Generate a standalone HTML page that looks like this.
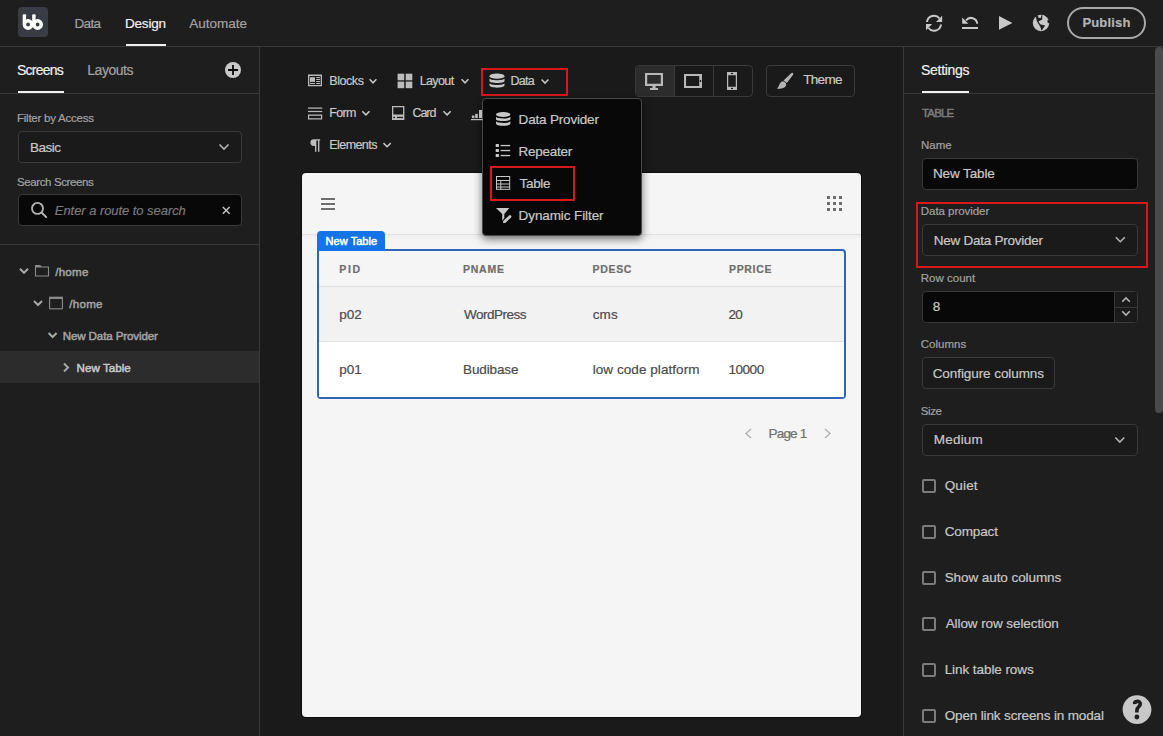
<!DOCTYPE html>
<html><head><meta charset="utf-8"><style>
*{box-sizing:border-box;margin:0;padding:0}
html,body{width:1163px;height:736px;overflow:hidden;background:#1a1a1a;font-family:'Liberation Sans',sans-serif;position:relative}
.t{position:absolute;z-index:6;-webkit-text-stroke:0.2px currentColor;white-space:nowrap;font-family:'Liberation Sans',sans-serif}
.probe{font-family:'Liberation Sans',sans-serif;white-space:nowrap}
.a{position:absolute}
svg{position:absolute;overflow:visible}

</style></head><body>
<!-- top bar -->
<div class="a" style="left:0;top:0;width:1163px;height:46px;background:#1e1e1e"></div>
<div class="a" style="left:0;top:46px;width:1163px;height:1px;background:#393939"></div>
<!-- logo -->
<div class="a" style="left:18px;top:7px;width:30px;height:30px;border-radius:4px;background:#3a3c45"></div>
<div class="a" style="left:126px;top:44px;width:40px;height:2px;background:#efefef"></div>
<!-- publish -->
<div class="a" style="left:1067px;top:7px;width:79px;height:32px;border-radius:16px;border:2px solid #a8a8a8"></div>

<!-- left panel -->
<div class="a" style="left:0;top:47px;width:259px;height:689px;background:#1e1e1e"></div>
<div class="a" style="left:259px;top:47px;width:1px;height:689px;background:#393939"></div>
<div class="a" style="left:18px;top:91px;width:46px;height:2px;background:#efefef"></div>
<div class="a" style="left:0;top:93px;width:259px;height:1px;background:#393939"></div>
<div class="a" style="left:18px;top:131px;width:224px;height:32px;border-radius:4px;border:1px solid #393939;background:#1a1a1a"></div>
<div class="a" style="left:18px;top:194px;width:224px;height:32px;border-radius:4px;border:1px solid #393939;background:#080808"></div>
<div class="a" style="left:0;top:244px;width:259px;height:1px;background:#393939"></div>
<div class="a" style="left:0;top:351px;width:259px;height:32px;background:#2c2c2c"></div>

<!-- right panel -->
<div class="a" style="left:903px;top:47px;width:1px;height:689px;background:#393939"></div>
<div class="a" style="left:904px;top:47px;width:259px;height:689px;background:#1e1e1e"></div>
<div class="a" style="left:922px;top:91px;width:47px;height:2px;background:#efefef"></div>
<div class="a" style="left:904px;top:93px;width:251px;height:1px;background:#393939"></div>
<div class="a" style="left:1155px;top:47px;width:8px;height:366px;border-radius:4px;background:#4a4a4a"></div>
<div class="a" style="left:922px;top:158px;width:216px;height:32px;border-radius:4px;border:1px solid #393939;background:#080808"></div>
<div class="a" style="left:922px;top:224px;width:216px;height:32px;border-radius:4px;border:1px solid #393939;background:#1a1a1a"></div>
<div class="a" style="left:916px;top:202px;width:232px;height:66px;border:2px solid #d7191e"></div>
<div class="a" style="left:922px;top:291px;width:216px;height:32px;border-radius:4px;border:1px solid #393939;background:#080808"></div>
<div class="a" style="left:1114px;top:292px;width:23px;height:30px;border-left:1px solid #393939;background:#1a1a1a;border-radius:0 3px 3px 0"></div>
<div class="a" style="left:1115px;top:307px;width:22px;height:1px;background:#393939"></div>
<div class="a" style="left:922px;top:357px;width:133px;height:32px;border-radius:4px;border:1px solid #393939;background:#1a1a1a"></div>
<div class="a" style="left:922px;top:424px;width:216px;height:32px;border-radius:4px;border:1px solid #393939;background:#1a1a1a"></div>
<div class="a" style="left:922px;top:479px;width:14px;height:14px;border-radius:2px;border:2px solid #7b7b7b"></div>
<div class="a" style="left:922px;top:525px;width:14px;height:14px;border-radius:2px;border:2px solid #7b7b7b"></div>
<div class="a" style="left:922px;top:571px;width:14px;height:14px;border-radius:2px;border:2px solid #7b7b7b"></div>
<div class="a" style="left:922px;top:617px;width:14px;height:14px;border-radius:2px;border:2px solid #7b7b7b"></div>
<div class="a" style="left:922px;top:663px;width:14px;height:14px;border-radius:2px;border:2px solid #7b7b7b"></div>
<div class="a" style="left:922px;top:709px;width:14px;height:14px;border-radius:2px;border:2px solid #7b7b7b"></div>


<!-- center toolbar -->
<div class="a" style="left:481px;top:68px;width:87px;height:28px;border:2px solid #d7191e"></div>
<div class="a" style="left:635px;top:65px;width:118px;height:32px;border-radius:4px;border:1px solid #393939"></div>
<div class="a" style="left:636px;top:66px;width:38px;height:30px;border-radius:3px 0 0 3px;background:#2c2c2c"></div>
<div class="a" style="left:674px;top:66px;width:1px;height:30px;background:#393939"></div>
<div class="a" style="left:713px;top:66px;width:1px;height:30px;background:#393939"></div>
<div class="a" style="left:766px;top:65px;width:89px;height:32px;border-radius:4px;border:1px solid #393939"></div>

<!-- preview screen -->
<div class="a" style="left:301px;top:172px;width:561px;height:546px;border-radius:5px;background:#0e0e0e"></div>
<div class="a" style="left:302px;top:173px;width:559px;height:544px;border-radius:4px;background:#f5f5f5"></div>
<div class="a" style="left:302px;top:234px;width:559px;height:1px;background:#e1e1e1"></div>
<div class="a" style="left:302px;top:235px;width:559px;height:5px;background:linear-gradient(#eeeeee,#f5f5f5)"></div>
<div class="a" style="left:317px;top:249px;width:529px;height:150px;border:2px solid #2f66b3;border-radius:0 4px 4px 4px"></div>
<div class="a" style="left:319px;top:286px;width:525px;height:1px;background:#e1e1e1"></div>
<div class="a" style="left:319px;top:287px;width:525px;height:54px;background:#f2f2f2"></div>
<div class="a" style="left:319px;top:341px;width:525px;height:1px;background:#e1e1e1"></div>
<div class="a" style="left:319px;top:342px;width:525px;height:55px;background:#ffffff"></div>
<div class="a" style="left:317px;top:231px;width:68px;height:20px;border-radius:4px 4px 0 0;background:#1473e6"></div>

<!-- popover -->
<div class="a" style="left:482px;top:98px;width:160px;height:138px;border-radius:4px;border:1px solid #494949;background:#080808;box-shadow:0 3px 9px rgba(0,0,0,.55)"></div>
<div class="a" style="left:490px;top:166px;width:85px;height:35px;border:2px solid #d7191e"></div>
<svg width="1163" height="736" viewBox="0 0 1163 736" style="left:0;top:0;z-index:5">
<!-- logo bb -->
<g fill="#ffffff" fill-rule="evenodd">
 <path d="M22.7,15.2 a1,1 0 0 1 1,-1 h1.4 a1,1 0 0 1 1,1 V24.5 h-3.4 Z"/>
 <path d="M28.1,19.1 a5.4,5.4 0 1,1 0,10.8 a5.4,5.4 0 1,1 0,-10.8 z M28.1,22.6 a1.9,1.9 0 1,0 0,3.8 a1.9,1.9 0 1,0 0,-3.8z"/>
 <path d="M32.2,15.2 a1,1 0 0 1 1,-1 h1.4 a1,1 0 0 1 1,1 V24.5 h-3.4 Z"/>
 <path d="M37.6,19.1 a5.4,5.4 0 1,1 0,10.8 a5.4,5.4 0 1,1 0,-10.8 z M37.6,22.6 a1.9,1.9 0 1,0 0,3.8 a1.9,1.9 0 1,0 0,-3.8z"/>
</g>
<!-- refresh -->
<g fill="none" stroke="#c8c8c8" stroke-width="2">
 <path d="M927,22 A7,7 0 0 1 939.5,18.5"/>
 <path d="M941,24.5 A7,7 0 0 1 928.5,28"/>
</g>
<g fill="#c8c8c8">
 <path d="M942.2,15.8 L942.2,22 L936,22 Z"/>
 <path d="M926,24 L932.2,24 L926,30.2 Z"/>
 <!-- undo -->
 <path d="M962.2,17.6 L962.2,23.8 L968.4,23.8 Z"/>
 <rect x="962" y="27" width="16" height="2"/>
 <!-- play -->
 <path d="M999,16 L1012.4,23 L999,29.8 Z"/>
</g>
<path d="M966,20.5 A6.2,6.2 0 0 1 977.2,23.8" fill="none" stroke="#c8c8c8" stroke-width="2"/>
<!-- globe -->
<circle cx="1041" cy="23" r="8.2" fill="#c8c8c8"/>
<path d="M1035.6,16.6 L1038,15.2 L1038.4,17.7 L1040.8,18 L1041.6,15 L1042.3,15.2 L1042.2,19.6 L1040.4,20.6 L1038.6,21.2 L1039,22.6 L1040.6,24.4 L1045.2,25.4 L1041.5,30.8 L1040.2,26.4 L1038.4,23.8 L1036.8,21 L1036.2,18.2 Z M1047.3,20.2 L1049.4,19.8 L1049.4,23.2 L1047.8,22.9 Z" fill="#1e1e1e"/>
<!-- plus circle -->
<circle cx="233" cy="70" r="8" fill="#c8c8c8"/>
<path d="M228,70 H238 M233,65 V75" stroke="#080808" stroke-width="1.8"/>
<!-- select chevron left -->
<path d="M219.5,144.5 L224,149 L228.5,144.5" fill="none" stroke="#b4b4b4" stroke-width="1.6"/>
<!-- search icon -->
<circle cx="37.5" cy="208.4" r="5.5" fill="none" stroke="#b4b4b4" stroke-width="1.8"/>
<path d="M41.6,212.5 L46.2,217.1" stroke="#b4b4b4" stroke-width="2" stroke-linecap="round"/>
<!-- close x -->
<path d="M222.8,207 L229.6,213.8 M229.6,207 L222.8,213.8" stroke="#c0c0c0" stroke-width="1.5"/>
<!-- tree chevrons -->
<g fill="none" stroke="#a8a8a8" stroke-width="2">
 <path d="M20,268.8 L24,272.8 L28,268.8"/>
 <path d="M34,301 L38,305 L42,301"/>
 <path d="M48.6,333 L52.6,337 L56.6,333"/>
 <path d="M64,363.5 L68,367.5 L64,371.5"/>
</g>
<!-- folder -->
<path d="M35.5,267 H48.5 V276 H35.5 Z" fill="none" stroke="#8a8a8a" stroke-width="1.1"/>
<path d="M35,265 H40.5 L41.5,267 H35 Z" fill="#8a8a8a"/>
<!-- window -->
<rect x="49.6" y="297.4" width="12.8" height="11.4" fill="none" stroke="#8a8a8a" stroke-width="1.1"/>
<rect x="49" y="296.8" width="14" height="2.2" fill="#8a8a8a"/>
<!-- toolbar: blocks -->
<g fill="#bcbcbc">
 <path fill-rule="evenodd" d="M308,74.6 H322 V86.2 H308 Z M309.3,75.9 V84.9 H320.7 V75.9 Z"/>
 <rect x="310" y="77.2" width="5" height="4.7"/>
 <rect x="316.2" y="77" width="3.8" height="1"/>
 <rect x="316.2" y="79" width="3.8" height="1"/>
 <rect x="316.2" y="81" width="3.8" height="1"/>
 <rect x="316.2" y="83" width="3.8" height="1"/>
 <rect x="310" y="83" width="5" height="1"/>
 <!-- layout -->
 <rect x="397.6" y="73.7" width="6.6" height="6.6"/>
 <rect x="405.7" y="73.7" width="6.6" height="6.6"/>
 <rect x="397.6" y="81.6" width="6.6" height="6.6"/>
 <rect x="405.7" y="81.6" width="6.6" height="6.6"/>
 <!-- form -->
 <rect x="308" y="107.5" width="14.2" height="1.2"/>
 <rect x="308" y="110.9" width="14.2" height="1.2"/>
 <path fill-rule="evenodd" d="M308,114.6 H322.2 V119.4 H308 Z M309.2,115.8 V118.2 H321 V115.8 Z"/>
 <!-- card -->
 <path fill-rule="evenodd" d="M392,106 H404.4 V120 H392 Z M393.3,107.3 V114.6 H403.1 V107.3 Z"/>
 <rect x="393.2" y="116.8" width="1.8" height="1.3" fill="#1e1e1e"/>
 <rect x="397" y="116.8" width="6" height="1.3" fill="#1e1e1e"/>
 <!-- pilcrow -->
 <path d="M313.8,139.2 H320.2 V140.6 H319.4 V151.8 H318 V140.6 H316.4 V151.8 H315 V146 H313.8 A3.4,3.4 0 0 1 313.8,139.2 Z"/>
 <!-- chart (clipped) -->
 <rect x="471.9" y="115.5" width="2.5" height="2.6"/>
 <rect x="475.2" y="113.9" width="2.6" height="4.2"/>
 <rect x="479" y="110" width="3" height="8.1"/>
 <rect x="471" y="119" width="11.5" height="1.2"/>
</g>
<!-- toolbar chevrons -->
<g fill="none" stroke="#c8c8c8" stroke-width="1.5">
 <path d="M369.6,79.2 L373,82.8 L376.4,79.2"/>
 <path d="M461.6,79.2 L465,82.8 L468.4,79.2"/>
 <path d="M541.6,79.5 L545,83.1 L548.4,79.5"/>
 <path d="M362.3,111.3 L365.9,114.9 L369.5,111.3"/>
 <path d="M443.5,111.3 L447.1,114.9 L450.7,111.3"/>
 <path d="M383.5,143.1 L387.1,146.7 L390.7,143.1"/>
</g>
<!-- data DB icon -->
<g fill="#c8c8c8">
 <ellipse cx="497" cy="76.2" rx="7.5" ry="2.6"/>
 <path d="M489.5,78.2 C489.5,80.8 504.5,80.8 504.5,78.2 V81 C504.5,83.6 489.5,83.6 489.5,81 Z"/>
 <path d="M489.5,83 C489.5,85.6 504.5,85.6 504.5,83 V85.3 C504.5,88.5 489.5,88.5 489.5,85.3 Z"/>
</g>
<!-- desktop -->
<g fill="#b8b8b8">
 <path fill-rule="evenodd" d="M645,72.9 H663 V86 H645 Z M647.2,75.1 V83.8 H660.8 V75.1 Z"/>
 <rect x="652.4" y="86" width="3.2" height="2.4"/>
 <rect x="650" y="88" width="8" height="2"/>
 <!-- tablet -->
 <path fill-rule="evenodd" d="M684,74 H702 V88 H684 Z M686.1,76.1 V85.9 H699.2 V76.1 Z"/>
 <!-- phone -->
 <path fill-rule="evenodd" d="M727,71.9 H737 V90.1 H727 Z M728.2,75.2 V86.8 H735.8 V75.2 Z"/>
</g>
<circle cx="700.5" cy="81" r="0.9" fill="#1a1a1a"/>
<ellipse cx="732" cy="73.5" rx="1.1" ry="0.7" fill="#1a1a1a"/>
<ellipse cx="732" cy="88.5" rx="1.1" ry="0.7" fill="#1a1a1a"/>
<!-- brush -->
<path d="M792.3,72.8 C793.3,73.1 793.5,74.2 792.9,75 L786.8,82.9 L783.5,80.6 L790.9,73.5 C791.4,73 791.9,72.7 792.3,72.8 Z" fill="#b4b4b4"/>
<path d="M782.8,81.3 C784.6,81.6 786.4,83 786.2,85 C785.8,87.6 782,89.2 776.8,88.8 C779.4,87.2 779,82 782.8,81.3 Z" fill="#b4b4b4"/>
<!-- popover icons -->
<g fill="#c8c8c8">
 <ellipse cx="503.2" cy="114.5" rx="7.2" ry="2.5"/>
 <path d="M496,116.5 C496,119 510.4,119 510.4,116.5 V119.2 C510.4,121.7 496,121.7 496,119.2 Z"/>
 <path d="M496,121 C496,123.5 510.4,123.5 510.4,121 V123.4 C510.4,126.6 496,126.6 496,123.4 Z"/>
 <!-- repeater -->
 <rect x="495.7" y="144" width="3.2" height="3"/>
 <rect x="495.7" y="149" width="3.2" height="3"/>
 <rect x="495.7" y="154" width="3.2" height="3"/>
 <rect x="500.6" y="144.9" width="9.6" height="1.3"/>
 <rect x="500.6" y="149.9" width="9.6" height="1.3"/>
 <rect x="500.6" y="154.9" width="9.6" height="1.3"/>
 <!-- filter -->
 <path d="M496,208 H509.3 L504.3,214 V219 L502.2,221 V214 Z"/>
</g>
<path d="M504.6,221.6 L510,216.6" stroke="#080808" stroke-width="5" stroke-linecap="round"/>
<path d="M504.6,221.6 L510,216.6" stroke="#c8c8c8" stroke-width="2.8" stroke-linecap="round"/>
<path d="M503,223.2 L503.6,221.2 L505,222.6 Z" fill="#c8c8c8"/>
<g fill="none" stroke="#c8c8c8" stroke-width="1">
 <rect x="496.5" y="176.5" width="13.2" height="12.8"/>
 <path d="M496.5,180.5 H509.7 M496.5,184 H509.7 M496.5,187 H509.7 M500.8,180.5 V189.3"/>
</g>
<!-- hamburger / grid -->
<g fill="#6e6e6e">
 <rect x="321" y="198" width="14" height="2"/>
 <rect x="321" y="203" width="14" height="2"/>
 <rect x="321" y="208" width="14" height="2"/>
 <rect x="827" y="196" width="3" height="3"/><rect x="833" y="196" width="3" height="3"/><rect x="839" y="196" width="3" height="3"/>
 <rect x="827" y="202" width="3" height="3"/><rect x="833" y="202" width="3" height="3"/><rect x="839" y="202" width="3" height="3"/>
 <rect x="827" y="208" width="3" height="3"/><rect x="833" y="208" width="3" height="3"/><rect x="839" y="208" width="3" height="3"/>
</g>
<!-- pagination -->
<g fill="none" stroke="#b3b3b3" stroke-width="1.5">
 <path d="M751,429 L746,433.5 L751,438"/>
 <path d="M825,429 L830,433.5 L825,438"/>
</g>
<!-- right panel chevrons -->
<g fill="none" stroke="#b4b4b4" stroke-width="1.6">
 <path d="M1115.8,237.2 L1120.3,241.7 L1124.8,237.2"/>
 <path d="M1115.3,437.5 L1119.8,442 L1124.3,437.5"/>
 <path d="M1122.2,301.8 L1126,298 L1129.8,301.8"/>
 <path d="M1122.2,311.2 L1126,315 L1129.8,311.2"/>
</g>
<circle cx="1137" cy="709.6" r="14.4" fill="#c8c8c8"/>
<path d="M1134.6,704.2 C1134.4,700.6 1140.2,700.3 1140.3,703.8 C1140.4,706.6 1136.9,707 1136.9,710.2 V712.6" fill="none" stroke="#1e1e1e" stroke-width="3.6"/>
<circle cx="1136.9" cy="717" r="2.4" fill="#1e1e1e"/>
</svg>

<div class="t" style="left:74.50px;top:15.58px;font-size:13.5px;font-weight:400;color:#a2a2a2;letter-spacing:-0.667px;">Data</div>
<div class="t" style="left:125.00px;top:15.58px;font-size:13.5px;font-weight:400;color:#efefef;letter-spacing:-0.200px;">Design</div>
<div class="t" style="left:189.30px;top:15.58px;font-size:13.5px;font-weight:400;color:#a2a2a2;letter-spacing:0.000px;">Automate</div>
<div class="t" style="left:1082.40px;top:15.44px;font-size:13px;font-weight:700;color:#b4b4b4;letter-spacing:0.167px;">Publish</div>
<div class="t" style="left:17.00px;top:62.42px;font-size:14px;font-weight:400;color:#efefef;letter-spacing:-0.767px;">Screens</div>
<div class="t" style="left:87.30px;top:62.42px;font-size:14px;font-weight:400;color:#a2a2a2;letter-spacing:-0.467px;">Layouts</div>
<div class="t" style="left:17.00px;top:111.92px;font-size:11.5px;font-weight:400;color:#a2a2a2;letter-spacing:-0.240px;">Filter by Access</div>
<div class="t" style="left:30.00px;top:139.88px;font-size:13.5px;font-weight:400;color:#c8c8c8;letter-spacing:-0.500px;">Basic</div>
<div class="t" style="left:17.00px;top:176.02px;font-size:11.5px;font-weight:400;color:#a2a2a2;letter-spacing:-0.385px;">Search Screens</div>
<div class="t" style="left:54.80px;top:202.54px;font-size:13px;font-weight:400;color:#7b7b7b;letter-spacing:-0.055px;font-style:italic;">Enter a route to search</div>
<div class="t" style="left:55.20px;top:265.03px;font-size:11.6px;font-weight:400;color:#a2a2a2;letter-spacing:0.250px;-webkit-text-stroke:0.5px currentColor;">/home</div>
<div class="t" style="left:69.30px;top:297.03px;font-size:11.6px;font-weight:400;color:#a2a2a2;letter-spacing:0.250px;-webkit-text-stroke:0.5px currentColor;">/home</div>
<div class="t" style="left:62.70px;top:329.33px;font-size:11.6px;font-weight:400;color:#a2a2a2;letter-spacing:-0.125px;-webkit-text-stroke:0.5px currentColor;">New Data Provider</div>
<div class="t" style="left:76.60px;top:361.13px;font-size:11.6px;font-weight:400;color:#c8c8c8;letter-spacing:0.025px;-webkit-text-stroke:0.5px currentColor;">New Table</div>
<div class="t" style="left:329.30px;top:73.50px;font-size:12.5px;font-weight:400;color:#c8c8c8;letter-spacing:-0.440px;">Blocks</div>
<div class="t" style="left:419.70px;top:73.50px;font-size:12.5px;font-weight:400;color:#c8c8c8;letter-spacing:-0.620px;">Layout</div>
<div class="t" style="left:510.60px;top:73.50px;font-size:12.5px;font-weight:400;color:#c8c8c8;letter-spacing:-0.767px;">Data</div>
<div class="t" style="left:329.30px;top:105.50px;font-size:12.5px;font-weight:400;color:#c8c8c8;letter-spacing:-0.667px;">Form</div>
<div class="t" style="left:412.50px;top:105.50px;font-size:12.5px;font-weight:400;color:#c8c8c8;letter-spacing:-1.067px;">Card</div>
<div class="t" style="left:329.30px;top:137.50px;font-size:12.5px;font-weight:400;color:#c8c8c8;letter-spacing:-0.571px;">Elements</div>
<div class="t" style="left:518.60px;top:111.58px;font-size:13.5px;font-weight:400;color:#c8c8c8;letter-spacing:-0.183px;">Data Provider</div>
<div class="t" style="left:518.60px;top:143.58px;font-size:13.5px;font-weight:400;color:#c8c8c8;letter-spacing:-0.286px;">Repeater</div>
<div class="t" style="left:519.60px;top:175.58px;font-size:13.5px;font-weight:400;color:#c8c8c8;letter-spacing:-0.350px;">Table</div>
<div class="t" style="left:518.60px;top:207.58px;font-size:13.5px;font-weight:400;color:#c8c8c8;letter-spacing:-0.100px;">Dynamic Filter</div>
<div class="t" style="left:803.20px;top:72.38px;font-size:13.5px;font-weight:400;color:#c8c8c8;letter-spacing:-0.675px;">Theme</div>
<div class="t" style="left:325.60px;top:234.68px;font-size:11px;font-weight:400;color:#ffffff;letter-spacing:0.050px;-webkit-text-stroke:0.5px currentColor;">New Table</div>
<div class="t" style="left:339.30px;top:263.14px;font-size:10.5px;font-weight:700;color:#6e6e6e;letter-spacing:1.650px;">PID</div>
<div class="t" style="left:463.00px;top:263.14px;font-size:10.5px;font-weight:700;color:#6e6e6e;letter-spacing:0.750px;">PNAME</div>
<div class="t" style="left:592.60px;top:263.14px;font-size:10.5px;font-weight:700;color:#6e6e6e;letter-spacing:0.650px;">PDESC</div>
<div class="t" style="left:729.00px;top:263.14px;font-size:10.5px;font-weight:700;color:#6e6e6e;letter-spacing:0.660px;">PPRICE</div>
<div class="t" style="left:339.30px;top:306.78px;font-size:13.5px;font-weight:400;color:#4b4b4b;letter-spacing:0.000px;">p02</div>
<div class="t" style="left:464.10px;top:306.78px;font-size:13.5px;font-weight:400;color:#4b4b4b;letter-spacing:-0.500px;">WordPress</div>
<div class="t" style="left:592.70px;top:306.78px;font-size:13.5px;font-weight:400;color:#4b4b4b;letter-spacing:0.100px;">cms</div>
<div class="t" style="left:728.60px;top:306.78px;font-size:13.5px;font-weight:400;color:#4b4b4b;letter-spacing:-0.800px;">20</div>
<div class="t" style="left:339.30px;top:361.68px;font-size:13.5px;font-weight:400;color:#4b4b4b;letter-spacing:0.000px;">p01</div>
<div class="t" style="left:463.10px;top:361.68px;font-size:13.5px;font-weight:400;color:#4b4b4b;letter-spacing:-0.143px;">Budibase</div>
<div class="t" style="left:592.70px;top:361.68px;font-size:13.5px;font-weight:400;color:#4b4b4b;letter-spacing:0.062px;">low code platform</div>
<div class="t" style="left:728.60px;top:361.68px;font-size:13.5px;font-weight:400;color:#4b4b4b;letter-spacing:-0.500px;">10000</div>
<div class="t" style="left:768.50px;top:425.98px;font-size:13.5px;font-weight:400;color:#6e6e6e;letter-spacing:-0.800px;">Page 1</div>
<div class="t" style="left:921.00px;top:62.12px;font-size:14px;font-weight:400;color:#efefef;letter-spacing:-0.286px;">Settings</div>
<div class="t" style="left:922.00px;top:106.62px;font-size:11.5px;font-weight:400;color:#7b7b7b;letter-spacing:-0.825px;-webkit-text-stroke:0.5px currentColor;">TABLE</div>
<div class="t" style="left:921.00px;top:138.92px;font-size:11.5px;font-weight:400;color:#a2a2a2;letter-spacing:0.000px;">Name</div>
<div class="t" style="left:932.90px;top:165.88px;font-size:13.5px;font-weight:400;color:#c8c8c8;letter-spacing:-0.100px;">New Table</div>
<div class="t" style="left:920.80px;top:205.32px;font-size:11.5px;font-weight:400;color:#a2a2a2;letter-spacing:-0.050px;">Data provider</div>
<div class="t" style="left:933.80px;top:232.78px;font-size:13.5px;font-weight:400;color:#c8c8c8;letter-spacing:-0.250px;">New Data Provider</div>
<div class="t" style="left:920.80px;top:271.62px;font-size:11.5px;font-weight:400;color:#a2a2a2;letter-spacing:0.000px;">Row count</div>
<div class="t" style="left:932.70px;top:299.08px;font-size:13.5px;font-weight:400;color:#c8c8c8;letter-spacing:0.700px;">8</div>
<div class="t" style="left:920.80px;top:338.42px;font-size:11.5px;font-weight:400;color:#a2a2a2;letter-spacing:0.000px;">Columns</div>
<div class="t" style="left:932.70px;top:365.58px;font-size:13.5px;font-weight:400;color:#c8c8c8;letter-spacing:-0.075px;">Configure columns</div>
<div class="t" style="left:920.80px;top:404.62px;font-size:11.5px;font-weight:400;color:#a2a2a2;letter-spacing:-0.433px;">Size</div>
<div class="t" style="left:933.80px;top:432.38px;font-size:13.5px;font-weight:400;color:#c8c8c8;letter-spacing:0.200px;">Medium</div>
<div class="t" style="left:944.70px;top:477.88px;font-size:13.5px;font-weight:400;color:#c8c8c8;letter-spacing:0.150px;">Quiet</div>
<div class="t" style="left:944.70px;top:523.88px;font-size:13.5px;font-weight:400;color:#c8c8c8;letter-spacing:-0.133px;">Compact</div>
<div class="t" style="left:944.70px;top:569.88px;font-size:13.5px;font-weight:400;color:#c8c8c8;letter-spacing:-0.075px;">Show auto columns</div>
<div class="t" style="left:945.70px;top:615.88px;font-size:13.5px;font-weight:400;color:#c8c8c8;letter-spacing:-0.089px;">Allow row selection</div>
<div class="t" style="left:944.70px;top:661.88px;font-size:13.5px;font-weight:400;color:#c8c8c8;letter-spacing:-0.071px;">Link table rows</div>
<div class="t" style="left:944.70px;top:707.88px;font-size:13.5px;font-weight:400;color:#c8c8c8;letter-spacing:-0.144px;">Open link screens in modal</div>
</body></html>
